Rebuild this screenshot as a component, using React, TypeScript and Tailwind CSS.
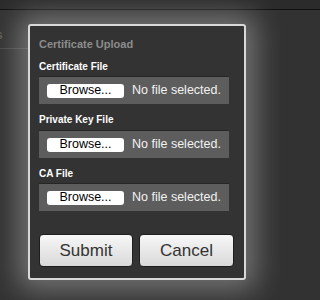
import React from "react";

const font = { fontFamily: '"Liberation Sans", Arial, sans-serif' };

function FileField({ label, first }: { label: string; first?: boolean }) {
  return (
    <div className="mt-[9px]">
      <div className="h-[14px] text-[10px] leading-[14px] font-bold text-white">{label}</div>
      <div className={`${first ? "mt-[2px]" : "mt-[3px]"} flex h-[28px] w-[190px] items-center border-t border-[#262626] bg-[#5d5d5d] pl-[8px]`}>
        <div className="flex h-[14px] w-[77px] items-center justify-center rounded-[3px] bg-white text-[12.5px] text-black">
          Browse...
        </div>
        <span className="ml-[8px] text-[12.5px] text-[#f2f2f2]">No file selected.</span>
      </div>
    </div>
  );
}

export default function App() {
  return (
    <div style={font} className="relative h-[300px] w-full min-w-[268px] overflow-hidden bg-[#323232]">
      {/* page behind the overlay */}
      <div className="h-[10px] border-b border-[#111] bg-[#2b2b2b]" />
      <div className="h-[39px] w-[28px] border-b border-[#474747] pt-[18px] text-[12px] leading-[14px]">
        <span className="ml-[-4px] font-bold text-[#5a5a5a]">s</span>
      </div>

      {/* modal */}
      <div className="absolute left-[28px] top-[24px] h-[256px] w-[218px] rounded-[3px] border-2 border-[#d9d9d9] bg-[#333333] pl-[9px] pr-[10px] pt-[11px] shadow-[0_0_28px_10px_rgba(255,255,255,0.32)]">
        <div className="h-[14px] text-[11px] leading-[14px] font-bold text-[#8c8c8c]">Certificate Upload</div>
        <FileField label="Certificate File" first />
        <FileField label="Private Key File" />
        <FileField label="CA File" first />
        <div className="mt-[23px] flex gap-[6px]">
          <button className="h-[33px] w-[94px] rounded-[4px] border border-[#1e1e1e] bg-gradient-to-b from-[#f7f7f7] to-[#d9d9d9] text-[17px] text-[#333]">
            Submit
          </button>
          <button className="h-[33px] w-[95px] rounded-[4px] border border-[#1e1e1e] bg-gradient-to-b from-[#f7f7f7] to-[#d9d9d9] text-[17px] text-[#333]">
            Cancel
          </button>
        </div>
      </div>
    </div>
  );
}
